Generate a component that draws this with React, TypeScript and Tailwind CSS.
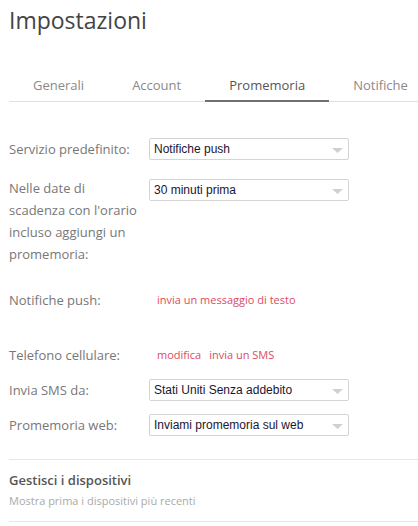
import React from 'react';

const tabs = ['Generali', 'Account', 'Promemoria', 'Notifiche'];

function Select({ value }: { value: string }) {
  return (
    <div className="relative flex items-center w-[200px] h-[22px] border border-[#d4d4d4] rounded-[2px] bg-white pl-[4px]">
      <span className="text-[12px] text-[#1c1530] leading-none" style={{ fontFamily: '"Liberation Sans", Arial, sans-serif' }}>
        {value}
      </span>
      <svg className="absolute right-[5px] top-[9px]" width="11" height="5" viewBox="0 0 11 5">
        <path d="M0 0 H11 L5.5 5 Z" fill="#d0d0d0" />
      </svg>
    </div>
  );
}

function Label({ children }: { children: React.ReactNode }) {
  return (
    <div className="w-[140px] shrink-0">
      <div className="w-[132px] text-[13px] leading-[22px] text-[#777]">{children}</div>
    </div>
  );
}

export default function App() {
  return (
    <div className="w-[418px] h-[526px] overflow-hidden bg-white pl-[9px]" style={{ fontFamily: '"Open Sans", sans-serif' }}>
      <h1 className="text-[23px] leading-[40px] text-[#444] font-normal">Impostazioni</h1>

      {/* Tabs */}
      <div className="mt-[35px] flex border-b border-[#e0e0e0]">
        {tabs.map((t) => (
          <div
            key={t}
            className={`px-6 pb-[5px] text-[13px] leading-[20px] whitespace-nowrap ${
              t === 'Promemoria' ? 'text-[#555] border-b-2 border-[#707070] -mb-px' : 'text-[#8a8a8a]'
            }`}
          >
            {t}
          </div>
        ))}
      </div>

      {/* Form rows */}
      <div className="mt-[36px] flex items-start">
        <Label>Servizio predefinito:</Label>
        <Select value="Notifiche push" />
      </div>

      <div className="mt-[17px] flex items-start">
        <Label>Nelle date di scadenza con l'orario incluso aggiungi un promemoria:</Label>
        <div className="pt-[2px]">
          <Select value="30 minuti prima" />
        </div>
      </div>

      <div className="mt-[24px] flex items-start">
        <Label>Notifiche push:</Label>
        <div className="pl-[8px] text-[11px] leading-[22px] text-[#dd4b63]">invia un messaggio di testo</div>
      </div>

      <div className="mt-[33px] flex items-start">
        <Label>Telefono cellulare:</Label>
        <div className="pl-[8px] flex gap-[8px] text-[11px] leading-[22px] text-[#dd4b63]">
          <span>modifica</span>
          <span>invia un SMS</span>
        </div>
      </div>

      <div className="mt-[13px] flex items-start">
        <Label>Invia SMS da:</Label>
        <Select value="Stati Uniti Senza addebito" />
      </div>

      <div className="mt-[13px] flex items-start">
        <Label>Promemoria web:</Label>
        <Select value="Inviami promemoria sul web" />
      </div>

      {/* Devices */}
      <div className="mt-[23px] border-t border-[#e6e6e6] pt-[10px] pb-[10px] border-b">
        <div className="text-[13px] leading-[20px] font-semibold text-[#555]">Gestisci i dispositivi</div>
        <div className="text-[11px] leading-[20px] text-[#aaa] mt-[1px]">Mostra prima i dispositivi più recenti</div>
      </div>
    </div>
  );
}
